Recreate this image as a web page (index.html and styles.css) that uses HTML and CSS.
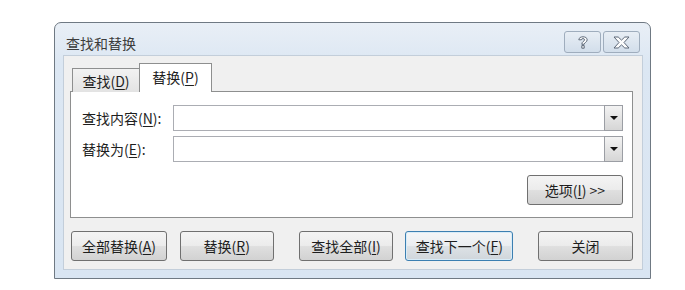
FILE: index.html
```html
<!DOCTYPE html>
<html lang="zh-CN">
<head>
<meta charset="utf-8">
<title>查找和替换</title>
<link rel="stylesheet" href="styles.css">
</head>
<body>
<div class="window">
  <div class="titlebar">
    <span class="title">查找和替换</span>
    <div class="caption-buttons">
      <div class="cap-btn">
        <svg width="12" height="15" viewBox="0 0 12 15"><path d="M1.8 4.8 C1.8 0.8 10.2 0.8 10.2 4.8 C10.2 7.2 7.2 7.5 7.2 9.3 L4.8 9.3 C4.8 6.4 7.6 6.3 7.6 4.8 C7.6 3.2 4.4 3.2 4.4 4.8 Z M4.8 10.6 L7.2 10.6 L7.2 13.2 L4.8 13.2 Z" fill="#fdfdfd" stroke="#5d6878" stroke-width="1" stroke-linejoin="round"/></svg>
      </div>
      <div class="cap-btn">
        <svg width="17" height="13" viewBox="0 0 17 13"><path d="M1 1 L5.2 1 L8.5 4.1 L11.8 1 L16 1 L11 6.5 L16 12 L11.8 12 L8.5 8.9 L5.2 12 L1 12 L6 6.5 Z" fill="#fdfdfd" stroke="#5d6878" stroke-width="1" stroke-linejoin="round"/></svg>
      </div>
    </div>
  </div>
  <div class="client">
    <div class="tabs">
      <div class="tab">查找(<u>D</u>)</div>
      <div class="tab active">替换(<u>P</u>)</div>
    </div>
    <div class="panel">
      <div class="row">
        <label class="label">查找内容(<u>N</u>):</label>
        <div class="combo"><span class="combo-field"></span><span class="combo-btn"><span class="arrow"></span></span></div>
      </div>
      <div class="row">
        <label class="label">替换为(<u>E</u>):</label>
        <div class="combo"><span class="combo-field"></span><span class="combo-btn"><span class="arrow"></span></span></div>
      </div>
      <div class="options-row">
        <button class="btn btn-options">选项(<u>I</u>) &gt;&gt;</button>
      </div>
    </div>
    <div class="actions">
      <button class="btn btn-replace-all">全部替换(<u>A</u>)</button>
      <button class="btn btn-replace">替换(<u>R</u>)</button>
      <button class="btn btn-find-all">查找全部(<u>I</u>)</button>
      <button class="btn btn-find-next default">查找下一个(<u>F</u>)</button>
      <button class="btn btn-close">关闭</button>
    </div>
  </div>
</div>
</body>
</html>
```

FILE: styles.css
```css
* { box-sizing: border-box; }
html, body { margin: 0; padding: 0; background: #ffffff; }
body {
  font-family: "Noto Sans CJK SC", "Noto Sans", sans-serif;
  font-size: 14px;
  color: #1e1e1e;
  padding: 22px 0 0 54px;
}
u { text-decoration: underline; text-underline-offset: 2px; }

.window {
  width: 597px;
  height: 257px;
  border: 1px solid #6f7983;
  border-radius: 7px 7px 0 0;
  background: linear-gradient(#e9eff6, #dce7f3 40px, #d9e5f2);
  display: flex;
  flex-direction: column;
}

.titlebar {
  height: 32px;
  display: flex;
  align-items: flex-start;
  justify-content: space-between;
  padding: 0 10px 0 11px;
}
.title {
  margin-top: 10px;
  font-size: 14px;
  color: #3c3c3c;
  line-height: 20px;
}
.caption-buttons {
  display: flex;
  gap: 2px;
  margin-top: 8px;
}
.cap-btn {
  width: 37px;
  height: 22px;
  border: 1px solid #9fadbd;
  border-radius: 3px;
  background: linear-gradient(#e8eef5, #d2deeb);
  display: flex;
  align-items: center;
  justify-content: center;
}

.client {
  flex: 1;
  margin: 0 7px 8px 8px;
  background: #f0f0f0;
  border: 1px solid #c3ceda;
  padding: 7px 9px 0 6px;
  display: flex;
  flex-direction: column;
}

.tabs {
  display: flex;
  align-items: flex-end;
  padding-left: 2px;
  height: 29px;
  position: relative;
  z-index: 1;
  margin-bottom: -1px;
}
.tab {
  height: 24px;
  width: 68px;
  border: 1px solid #8e8f8f;
  border-bottom: none;
  background: linear-gradient(#f2f2f2, #e3e3e3);
  display: flex;
  align-items: center;
  justify-content: center;
  line-height: 1;
}
.tab.active {
  height: 29px;
  width: 73px;
  margin-left: -1px;
  background: #ffffff;
  padding-bottom: 2px;
}

.panel {
  height: 127px;
  background: #ffffff;
  border: 1px solid #8e8f8f;
  padding: 13px 9px 0 11px;
  display: flex;
  flex-direction: column;
  gap: 5px;
}
.row {
  display: flex;
  align-items: center;
  height: 26px;
}
.label {
  width: 91px;
  flex: none;
}
.combo {
  flex: 1;
  height: 26px;
  border: 1px solid #abadb3;
  background: #ffffff;
  display: flex;
  padding: 0;
}
.combo-field { flex: 1; }
.combo-btn {
  width: 19px;
  border: 1px solid #9b9ea4;
  margin: -1px -1px -1px 0;
  background: linear-gradient(#f3f3f3, #e4e4e4 50%, #d6d6d6);
  display: flex;
  align-items: center;
  justify-content: center;
}
.arrow {
  width: 0;
  height: 0;
  border-left: 4px solid transparent;
  border-right: 4px solid transparent;
  border-top: 4px solid #111;
}

.options-row {
  display: flex;
  justify-content: flex-end;
  margin-top: 8px;
}

.btn {
  font-family: inherit;
  font-size: 14px;
  color: #1e1e1e;
  height: 30px;
  border: 1px solid #707070;
  border-radius: 3px;
  background: linear-gradient(#f4f4f4 0%, #ececec 48%, #dfdfdf 52%, #d2d2d2 100%);
  padding: 0;
  line-height: 1;
}
.btn-options { width: 96px; }

.actions {
  display: flex;
  margin-top: 13px;
  padding-left: 1px;
}
.btn-replace-all { width: 96px; }
.btn-replace { width: 94px; margin-left: 13px; }
.btn-find-all { width: 95px; margin-left: 25px; }
.btn-find-next { width: 108px; margin-left: 12px; }
.btn-close { width: 95px; margin-left: 25px; }
.btn.default {
  border-color: #3c7fb1;
  background: linear-gradient(#f4f6f8 0%, #ebeef1 48%, #dde2e6 52%, #d0d6db 100%);
  box-shadow: inset 0 0 0 1px #d8ecf8;
}
```
